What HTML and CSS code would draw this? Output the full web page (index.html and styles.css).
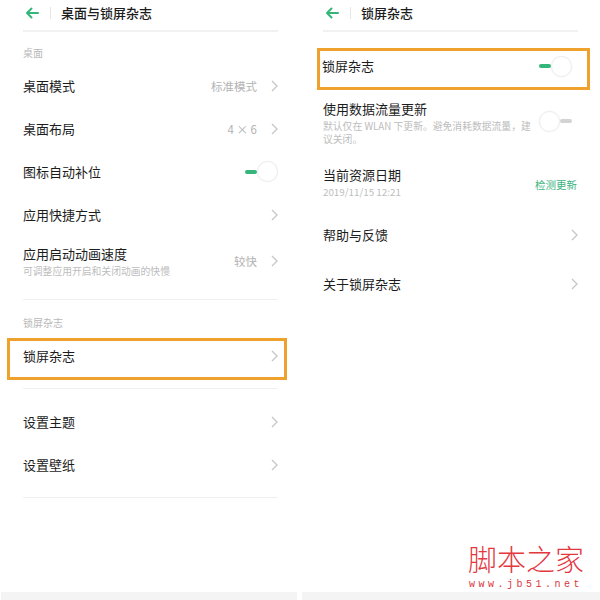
FILE: index.html
```html
<!DOCTYPE html>
<html>
<head>
    <title>桌面与锁屏杂志</title>
    <link rel="stylesheet" href="styles.css">
</head>
<body>
    <div class="screens">
        <!-- pannello sinistro -->
        <div class="panel">
            <div class="header">
                <svg class="back" width="14" height="12" viewBox="0 0 14 12"><path d="M13 6H2M6.5 1.5L2 6l4.5 4.5" fill="none" stroke="#34b67a" stroke-width="2" stroke-linecap="round" stroke-linejoin="round"/></svg>
                <span class="sep"></span>
                <span class="title">桌面与锁屏杂志</span>
            </div>

            <div class="label first">桌面</div>
            <div class="row"><span class="name">桌面模式</span><span class="value">标准模式</span><svg class="chev" width="7" height="12" viewBox="0 0 7 12"><path d="M1 1l5 5-5 5" fill="none" stroke="#c6c6c6" stroke-width="1.3"/></svg></div>
            <div class="row"><span class="name">桌面布局</span><span class="value">4 × 6</span><svg class="chev" width="7" height="12" viewBox="0 0 7 12"><path d="M1 1l5 5-5 5" fill="none" stroke="#c6c6c6" stroke-width="1.3"/></svg></div>
            <div class="row"><span class="name">图标自动补位</span><span class="toggle on"><i></i><b></b></span></div>
            <div class="row"><span class="name">应用快捷方式</span><svg class="chev" width="7" height="12" viewBox="0 0 7 12"><path d="M1 1l5 5-5 5" fill="none" stroke="#c6c6c6" stroke-width="1.3"/></svg></div>
            <div class="row tall">
                <div class="texts">
                    <div class="name">应用启动动画速度</div>
                    <div class="sub">可调整应用开启和关闭动画的快慢</div>
                </div>
                <span class="value">较快</span><svg class="chev" width="7" height="12" viewBox="0 0 7 12"><path d="M1 1l5 5-5 5" fill="none" stroke="#c6c6c6" stroke-width="1.3"/></svg>
            </div>
            <div class="divider"></div>

            <div class="label second">锁屏杂志</div>
            <div class="mark mark-left">
                <div class="row inner"><span class="name">锁屏杂志</span><svg class="chev" width="7" height="12" viewBox="0 0 7 12"><path d="M1 1l5 5-5 5" fill="none" stroke="#c6c6c6" stroke-width="1.3"/></svg></div>
            </div>
            <div class="divider thin"></div>
            <div class="row spaced"><span class="name">设置主题</span><svg class="chev" width="7" height="12" viewBox="0 0 7 12"><path d="M1 1l5 5-5 5" fill="none" stroke="#c6c6c6" stroke-width="1.3"/></svg></div>
            <div class="row"><span class="name">设置壁纸</span><svg class="chev" width="7" height="12" viewBox="0 0 7 12"><path d="M1 1l5 5-5 5" fill="none" stroke="#c6c6c6" stroke-width="1.3"/></svg></div>
            <div class="divider end"></div>

            <div class="bottom-bar"></div>
        </div>

        <!-- pannello destro -->
        <div class="panel">
            <div class="header">
                <svg class="back" width="14" height="12" viewBox="0 0 14 12"><path d="M13 6H2M6.5 1.5L2 6l4.5 4.5" fill="none" stroke="#34b67a" stroke-width="2" stroke-linecap="round" stroke-linejoin="round"/></svg>
                <span class="sep"></span>
                <span class="title">锁屏杂志</span>
            </div>

            <div class="mark mark-right">
                <div class="row inner"><span class="name">锁屏杂志</span><span class="toggle on"><i></i><b></b></span></div>
            </div>

            <div class="row block first-block">
                <div class="texts">
                    <div class="name">使用数据流量更新</div>
                    <div class="sub small">默认仅在 WLAN 下更新。避免消耗数据流量，建<br>议关闭。</div>
                </div>
                <span class="toggle off"><b></b><i></i></span>
            </div>
            <div class="row block second-block">
                <div class="texts">
                    <div class="name">当前资源日期</div>
                    <div class="sub small">2019/11/15 12:21</div>
                </div>
                <span class="check">检测更新</span>
            </div>
            <div class="row high"><span class="name">帮助与反馈</span><svg class="chev" width="7" height="12" viewBox="0 0 7 12"><path d="M1 1l5 5-5 5" fill="none" stroke="#c6c6c6" stroke-width="1.3"/></svg></div>
            <div class="row high"><span class="name">关于锁屏杂志</span><svg class="chev" width="7" height="12" viewBox="0 0 7 12"><path d="M1 1l5 5-5 5" fill="none" stroke="#c6c6c6" stroke-width="1.3"/></svg></div>

            <div class="watermark">
                <div class="wm-big">脚本之家</div>
                <div class="wm-small">www.jb51.net</div>
            </div>
            <div class="bottom-bar"></div>
        </div>
    </div>
</body>
</html>
```

FILE: styles.css
```css
body {
    margin: 0;
    background: #fff;
    font-family: "Noto Sans CJK SC", "Noto Sans", sans-serif;
    color: #1c1c1c;
}

.screens {
    display: grid;
    grid-template-columns: 300px 300px;
    width: 600px;
    height: 600px;
}

.panel {
    position: relative;
    display: flex;
    flex-direction: column;
    height: 600px;
    padding: 0 22px 0 23px;
}

.header {
    display: flex;
    align-items: center;
    height: 30px;
    border-bottom: 2px solid #f1f1f1;
    padding-left: 2px;
}

.header .back {
    margin-bottom: 5px;
}

.header .sep {
    width: 1px;
    height: 12px;
    background: #e6e6e6;
    margin: 0 10px 5px 11px;
}

.header .title {
    font-size: 13px;
    font-weight: 500;
    line-height: 16px;
    margin-bottom: 5px;
}

.label {
    font-size: 10px;
    line-height: 12px;
    color: #b8b8b8;
}

.label.first {
    padding: 15px 0 5px;
}

.label.second {
    padding: 17px 0 9px;
}

.row {
    display: flex;
    align-items: center;
    height: 43px;
}

.row .name {
    flex: 1;
    font-size: 13px;
    line-height: 18px;
}

.row .value {
    font-size: 11.5px;
    color: #b3b3b3;
    margin-right: 14px;
}

.chev {
    flex: none;
}

.row.tall {
    height: 54px;
    align-items: flex-start;
    padding-top: 9px;
    box-sizing: border-box;
}

.row.tall .value {
    margin-top: 8px;
}

.row.tall .chev {
    margin-top: 10px;
}

.texts {
    flex: 1;
}

.sub {
    font-size: 9.8px;
    line-height: 14px;
    color: #bdbdbd;
    margin-top: 1px;
}

.sub.small {
    line-height: 13px;
    margin-top: 2px;
}

.divider {
    border-top: 1px solid #efefef;
    margin-top: 9px;
}

.divider.thin {
    margin-top: 8px;
}

.divider.end {
    margin-top: 11px;
}

.row.spaced {
    margin-top: 11px;
}

/* riquadro arancione di evidenziazione */
.mark {
    border: 3px solid #eea12c;
}

.mark-left {
    margin: 0 -9px 0 -16px;
    padding: 0 6px 0 13px;
}

.mark-right {
    margin: 16px -12px 0 -6px;
    padding: 0 15px 0 2px;
}

.row.inner {
    height: 36px;
    box-sizing: border-box;
    padding-bottom: 6px;
}

.toggle {
    display: flex;
    align-items: center;
    flex: none;
}

.toggle i {
    display: block;
    width: 12px;
    height: 4px;
    border-radius: 2px;
}

.toggle b {
    display: block;
    width: 19px;
    height: 19px;
    border-radius: 50%;
    border: 1px solid #ececec;
    box-shadow: 0 0 2px rgba(0, 0, 0, 0.05);
    background: #fff;
}

.toggle.on i {
    background: #34b67a;
}

.toggle.off i {
    background: #d3d3d3;
}

.toggle.off {
    margin: 0 6px 4px 0;
}

.row.block {
    height: auto;
    align-items: center;
}

.first-block {
    padding: 10px 0 10px;
}

.second-block {
    padding: 10px 0 11px;
}

.check {
    font-size: 10.5px;
    color: #3bb47f;
    margin-right: 1px;
    margin-top: 4px;
}

.row.high {
    height: 49px;
}

.bottom-bar {
    margin: auto -23px 0 -22px;
    height: 8px;
    background: #f4f4f4;
}

.panel:first-child .bottom-bar {
    margin-right: -19px;
}

.panel:last-child .bottom-bar {
    margin-left: -21px;
}

/* filigrana */
.watermark {
    position: absolute;
    right: 16px;
    bottom: 9px;
    text-align: center;
}

.wm-big {
    font-family: "Noto Sans CJK SC", serif;
    font-size: 29px;
    line-height: 32px;
    color: #e4383f;
    font-weight: 300;
}

.wm-small {
    font-family: "Liberation Mono", monospace;
    font-size: 10px;
    line-height: 12px;
    letter-spacing: 3.5px;
    margin-top: 5px;
    color: #d9353c;
}
```
